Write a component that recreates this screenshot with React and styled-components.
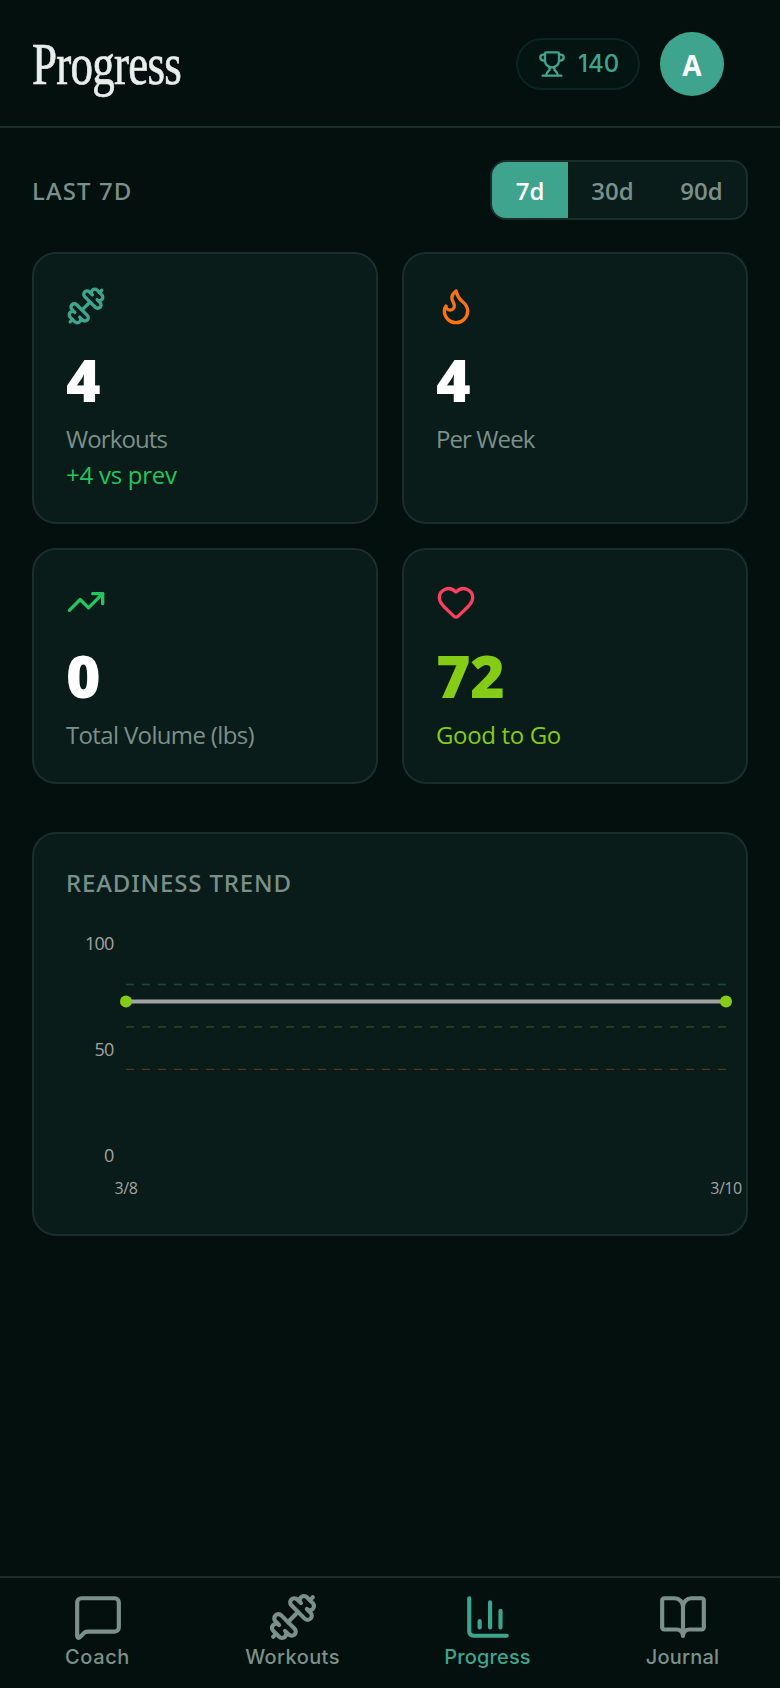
import React from 'react';
import styled, { createGlobalStyle, ThemeProvider } from 'styled-components';
import {
  Trophy, Dumbbell, Flame, TrendingUp, Heart, MessageSquare, ChartColumn, BookOpen,
} from 'lucide-react';

const theme = {
  bg: '#03100d',
  card: '#0a1c19',
  line: '#1b2e2a',
  accent: '#3fa48d',
  muted: '#7b908a',
  green: '#22c55e',
  lime: '#84cc16',
  orange: '#f97316',
  rose: '#fb3f5e',
  sans: "'Open Sans', 'Noto Sans', sans-serif",
  ui: "'Inter', sans-serif",
  display: "'Liberation Serif', serif",
};

const GlobalStyle = createGlobalStyle`
  *, *::before, *::after { box-sizing: border-box; }
  body { margin: 0; background: ${theme.bg}; }
  button { font: inherit; border: 0; background: none; padding: 0; margin: 0; }
`;

const Screen = styled.div`
  display: flex;
  flex-direction: column;
  width: 780px;
  height: 1688px;
  background: ${({ theme }) => theme.bg};
  font-family: ${({ theme }) => theme.sans};
  color: #fff;
`;

const Header = styled.header`
  display: flex;
  align-items: center;
  justify-content: space-between;
  flex: none;
  height: 128px;
  padding: 2px 56px 0 32px;
  border-bottom: 2px solid ${({ theme }) => theme.line};
`;

const Title = styled.h1`
  margin: 0;
  font-family: ${({ theme }) => theme.display};
  font-weight: 400;
  font-size: 60px;
  line-height: 72px;
  letter-spacing: -1px;
  color: #e8eeec;
  -webkit-text-stroke: 0.7px #e8eeec;
  transform: scaleX(0.75);
  transform-origin: left center;
`;

const HeaderActions = styled.div`
  display: flex;
  align-items: center;
  gap: 20px;
`;

const PointsPill = styled.div`
  display: flex;
  align-items: center;
  gap: 12px;
  width: 124px;
  height: 52px;
  padding-left: 20px;
  border: 2px solid #0b2520;
  border-radius: 26px;
  background: #041411;
  color: ${({ theme }) => theme.accent};
  font: 450 24px/32px ${({ theme }) => theme.ui};
`;

const Avatar = styled.div`
  display: grid;
  place-items: center;
  width: 64px;
  height: 64px;
  padding-top: 2px;
  border-radius: 50%;
  background: ${({ theme }) => theme.accent};
  font-weight: 700;
  font-size: 28px;
  line-height: 32px;
`;

const Main = styled.main`
  flex: 1;
  padding: 32px;
`;

const RangeRow = styled.div`
  display: flex;
  align-items: center;
  justify-content: space-between;
  height: 60px;
  margin-bottom: 32px;
`;

const SectionLabel = styled.h2`
  margin: 0;
  padding-top: 1px;
  font-family: 'Noto Sans', sans-serif;
  font-weight: 500;
  font-size: 24px;
  line-height: 32px;
  letter-spacing: ${({ $track }) => $track}px;
  text-transform: uppercase;
  color: ${({ theme }) => theme.muted};
`;

const Segmented = styled.div`
  display: flex;
  height: 60px;
  width: 258px;
  overflow: hidden;
  border: 2px solid ${({ theme }) => theme.line};
  border-radius: 16px;
  background: ${({ theme }) => theme.card};
`;

const Segment = styled.button`
  flex: ${({ $active }) => ($active ? '0 0 76px' : '1 1 0')};
  padding-top: 2px;
  font-weight: 600;
  font-size: 24px;
  line-height: 32px;
  background: ${({ $active, theme }) => ($active ? theme.accent : 'transparent')};
  color: ${({ $active, theme }) => ($active ? '#fff' : theme.muted)};
`;

const StatGrid = styled.section`
  display: grid;
  grid-template-columns: 1fr 1fr;
  grid-template-rows: 272px 236px;
  gap: 24px;
  margin-bottom: 48px;
`;

const Card = styled.article`
  padding: 32px;
  border: 2px solid ${({ theme }) => theme.line};
  border-radius: 24px;
  background: ${({ theme }) => theme.card};

  > svg { display: block; }
`;

const StatValue = styled.div`
  margin: 13px 0 4px;
  font-weight: 800;
  font-size: 59px;
  line-height: 80px;
  letter-spacing: -0.3px;
  color: ${({ $color }) => $color || '#fff'};
`;

const StatLabel = styled.div`
  font-size: 24px;
  line-height: 32px;
  letter-spacing: ${({ $track }) => $track}px;
  color: ${({ $color, theme }) => $color || theme.muted};

  & + & { margin-top: 4px; }
`;

const ChartCard = styled(Card)`
  height: 404px;
`;

const Chart = styled.svg`
  margin-top: 13px;
  overflow: visible;
  font-family: ${({ theme }) => theme.sans};
`;

const AxisText = styled.text`
  fill: #a3a3a3;
  font-size: ${({ $size }) => $size}px;
  letter-spacing: ${({ $track }) => $track}px;
`;

const TabBar = styled.nav`
  display: grid;
  grid-template-columns: repeat(4, 1fr);
  flex: none;
  height: 112px;
  padding-top: 14px;
  border-top: 2px solid ${({ theme }) => theme.line};
`;

const Tab = styled.button`
  display: flex;
  flex-direction: column;
  align-items: center;
  color: ${({ $active, theme }) => ($active ? theme.accent : theme.muted)};
`;

const TabLabel = styled.span`
  margin-top: 2px;
  font: 450 20px/26px ${({ theme }) => theme.ui};
  letter-spacing: ${({ $track }) => $track}px;
`;

const STATS = [
  { Icon: Dumbbell, tint: theme.accent, value: '4', label: 'Workouts', track: -0.9, note: '+4 vs prev' },
  { Icon: Flame, tint: theme.orange, value: '4', label: 'Per Week', track: -0.9 },
  { Icon: TrendingUp, tint: theme.green, value: '0', label: 'Total Volume (lbs)', track: -0.65 },
  { Icon: Heart, tint: theme.rose, value: '72', label: 'Good to Go', track: -0.35, color: theme.lime },
];

const TABS = [
  { Icon: MessageSquare, label: 'Coach', track: 0.6 },
  { Icon: Dumbbell, label: 'Workouts', track: 0.4 },
  { Icon: ChartColumn, label: 'Progress', track: 0.15, active: true },
  { Icon: BookOpen, label: 'Journal', track: 0.2 },
];

const THRESHOLDS = [
  { score: 80, color: theme.green, opacity: 0.3 },
  { score: 60, color: theme.lime, opacity: 0.3 },
  { score: 40, color: theme.orange, opacity: 0.3 },
];

const POINTS = [
  { x: 60, score: 72, day: '3/8' },
  { x: 660, score: 72, day: '3/10' },
];

const yFor = (score) => 242.1 - score * 2.12;

function ReadinessChart() {
  return (
    <Chart width="660" height="282" viewBox="0 0 660 282">
      {[100, 50, 0].map((tick) => (
        <AxisText key={tick} $size={18} $track={-0.8} x="47.5" y={yFor(tick) + 7.7} textAnchor="end">{tick}</AxisText>
      ))}
      {THRESHOLDS.map(({ score, color, opacity }) => (
        <line key={score} x1="60" x2="660" y1={yFor(score)} y2={yFor(score)}
          stroke={color} strokeOpacity={opacity} strokeWidth="1.3" strokeDasharray="8 8" />
      ))}
      <polyline points={POINTS.map((p) => `${p.x},${yFor(p.score)}`).join(' ')}
        fill="none" stroke="#a3a3a3" strokeWidth="4" />
      {POINTS.map((p) => (
        <circle key={p.day} cx={p.x} cy={yFor(p.score)} r="6" fill={theme.lime} />
      ))}
      {POINTS.map((p) => (
        <AxisText key={p.day} $size={16} $track={-0.4} x={p.x} y="282" textAnchor="middle">{p.day}</AxisText>
      ))}
    </Chart>
  );
}

export default function App() {
  return (
    <ThemeProvider theme={theme}>
      <GlobalStyle />
      <Screen>
        <Header>
          <Title>Progress</Title>
          <HeaderActions>
            <PointsPill><Trophy size={28} />140</PointsPill>
            <Avatar>A</Avatar>
          </HeaderActions>
        </Header>
        <Main>
          <RangeRow>
            <SectionLabel $track={1.1}>Last 7d</SectionLabel>
            <Segmented>
              <Segment $active>7d</Segment>
              <Segment>30d</Segment>
              <Segment>90d</Segment>
            </Segmented>
          </RangeRow>
          <StatGrid>
            {STATS.map(({ Icon, tint, value, label, track, note, color }) => (
              <Card key={label}>
                <Icon size={40} color={tint} />
                <StatValue $color={color}>{value}</StatValue>
                <StatLabel $color={color} $track={track}>{label}</StatLabel>
                {note && <StatLabel $color={theme.green} $track={-0.25}>{note}</StatLabel>}
              </Card>
            ))}
          </StatGrid>
          <ChartCard>
            <SectionLabel $track={0.85}>Readiness Trend</SectionLabel>
            <ReadinessChart />
          </ChartCard>
        </Main>
        <TabBar>
          {TABS.map(({ Icon, label, track, active }) => (
            <Tab key={label} $active={active}>
              <Icon size={50} />
              <TabLabel $track={track}>{label}</TabLabel>
            </Tab>
          ))}
        </TabBar>
      </Screen>
    </ThemeProvider>
  );
}
